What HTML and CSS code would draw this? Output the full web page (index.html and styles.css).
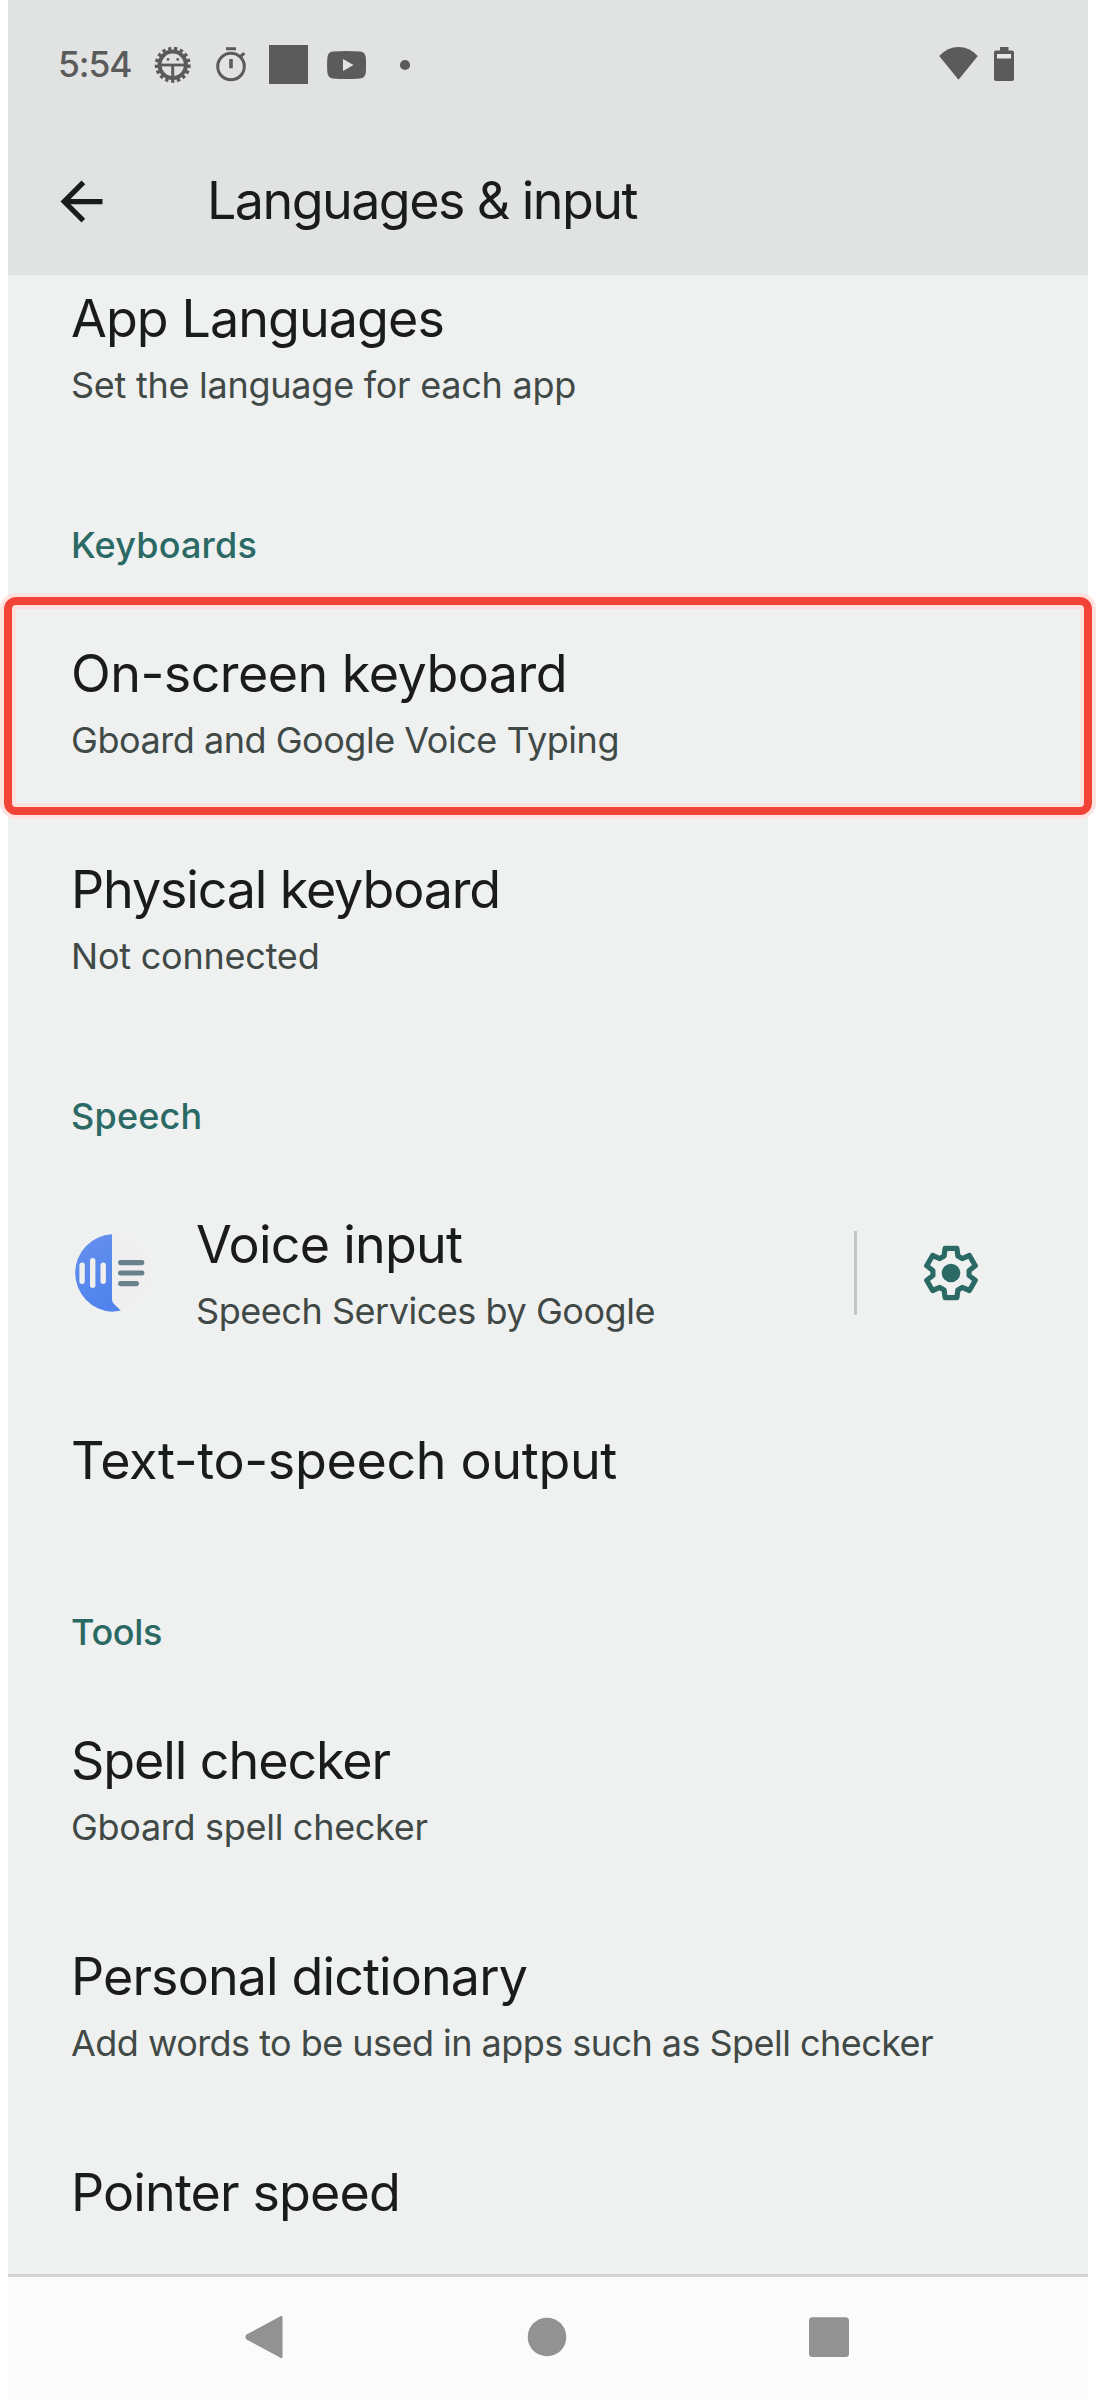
FILE: index.html
```html
<!DOCTYPE html>
<html lang="en">
<head>
<meta charset="utf-8">
<title>Languages &amp; input</title>
<link rel="stylesheet" href="styles.css">
</head>
<body>
<div class="phone">
  <header class="top">
    <div class="status">
      <span class="time">5:54</span>
      <div class="status-icons">
        <svg width="39" height="39" viewBox="0 0 39 39" fill="none" stroke="currentColor">
          <circle cx="19.7" cy="19.8" r="16" stroke-width="4" pathLength="34" stroke-dasharray="1.1 .9" transform="rotate(84.2 19.7 19.8)"/>
          <circle cx="19.7" cy="19.8" r="13.2" stroke-width="4"/>
          <path d="M7 20h25.400" stroke-width="2.800"/>
          <path d="M19.700 21v13" stroke-width="3"/>
          <g fill="currentColor" stroke="none"><circle cx="15" cy="14.400" r="1.400"/><circle cx="24.700" cy="14.400" r="1.400"/></g>
        </svg>
        <svg width="39" height="39" viewBox="0 0 39 39" fill="none" stroke="currentColor" stroke-width="3">
          <circle cx="20" cy="21.500" r="13.300"/>
          <path d="M15 3.700h10M29.500 11.500l3.800-3.300"/>
          <path d="M20 14v9.300" stroke-width="3.600"/>
        </svg>
        <svg width="39" height="39" viewBox="0 0 39 39" fill="currentColor"><path d="M0 0h39v39H0z"/></svg>
        <svg width="39" height="39" viewBox="0 0 39 39" fill="currentColor">
          <path fill-rule="evenodd" d="M6 6.600Q19.500 5.400 33 6.600 38.300 7 38.800 12.500 39.300 20 38.800 27.500 38.300 33 33 33.400 19.500 34.600 6 33.400.9 33 .4 27.500-.3 20 .4 12.500.9 7 6 6.600zM16 14v12l10.500-6z"/>
        </svg>
        <svg width="39" height="39" viewBox="0 0 39 39" fill="currentColor"><circle cx="20" cy="20" r="5.100"/></svg>
      </div>
      <div class="status-right">
        <svg width="39" height="39" viewBox="0 0 39 39" fill="currentColor"><path d="M.2 11Q8.500 2 19.500 2T38.800 11L19.500 34.700z"/></svg>
        <svg width="20" height="39" viewBox="0 0 20 39" fill="currentColor"><path fill-rule="evenodd" d="M6 2h8.500v3.500H18q2 0 2 2V34q0 2-2 2H2q-2 0-2-2V7.500q0-2 2-2h4z"/><path d="M3 9h14v4.500H3z" fill="#e9eaea"/></svg>
      </div>
    </div>
    <div class="appbar">
      <svg class="back" width="63" height="63" viewBox="0 0 24 24" fill="currentColor"><path d="M20 11H7.830l5.590-5.590L12 4l-8 8 8 8 1.410-1.410L7.830 13H20z"/></svg>
      <h1 class="t-bar">Languages &amp; input</h1>
    </div>
  </header>

  <main class="list">
    <section class="item first"><h2 class="t-app">App Languages</h2><p class="s-app">Set the language for each app</p></section>
    <h3 class="c-key">Keyboards</h3>
    <section class="item"><h2 class="t-screen">On-screen keyboard</h2><p class="s-screen">Gboard and Google Voice Typing</p><div class="highlight"></div></section>
    <section class="item"><h2 class="t-phys">Physical keyboard</h2><p class="s-phys">Not connected</p></section>
    <h3 class="c-speech">Speech</h3>
    <section class="item voice">
      <svg class="voice-icon" width="76" height="80" viewBox="0 0 76 80">
        <defs><linearGradient id="blue" x1="0" y1="0" x2="0.300" y2="1"><stop offset="0" stop-color="#6691ee"/><stop offset="1" stop-color="#5083ec"/></linearGradient></defs>
        <path d="M39 1.200a38.800 38.800 0 0 1 9 76.300L39 68z" fill="#efefef"/>
        <path d="M39 1.200V66q0 3 2 5l6.800 6.600Q43 78.700 39 78.700A38.800 38.800 0 0 1 39 1.200z" fill="url(#blue)"/>
        <g fill="#efefef"><rect x="6.400" y="29.500" width="5.400" height="21.500" rx="2.700"/><rect x="17" y="25" width="5.400" height="30" rx="2.700"/><rect x="27.500" y="29.500" width="5.400" height="21.500" rx="2.700"/></g>
        <g fill="#69808d"><rect x="45" y="27" width="26.400" height="5.200" rx="2.400"/><rect x="45" y="37.400" width="26.400" height="5.200" rx="2.400"/><rect x="45" y="48" width="21" height="5.200" rx="2.400"/></g>
      </svg>
      <div class="voice-text"><h2 class="t-voice">Voice input</h2><p class="s-voice">Speech Services by Google</p></div>
      <div class="divider"></div>
      <svg class="gear" width="60" height="60" viewBox="-30 -30 60 60">
        <path d="M-6.900-16.900-5.900-24.700H5.900L6.900-16.900 11.200-14.400 18.400-17.500 24.300-7.200 18.100-2.500V2.500L24.300 7.200 18.400 17.500 11.200 14.400 6.900 16.900 5.900 24.700H-5.900L-6.900 16.900-11.200 14.400-18.400 17.500-24.300 7.200-18.100 2.500V-2.500L-24.300-7.200-18.400-17.500-11.200-14.400z" fill="none" stroke="currentColor" stroke-width="5.200" stroke-linejoin="round"/>
        <circle r="9.300" fill="currentColor"/>
      </svg>
    </section>
    <section class="item single"><h2 class="t-tts">Text-to-speech output</h2></section>
    <h3 class="c-tools">Tools</h3>
    <section class="item"><h2 class="t-spell">Spell checker</h2><p class="s-spell">Gboard spell checker</p></section>
    <section class="item"><h2 class="t-dict">Personal dictionary</h2><p class="s-dict">Add words to be used in apps such as Spell checker</p></section>
    <section class="item single"><h2 class="t-pointer">Pointer speed</h2></section>
  </main>

  <nav class="nav">
    <svg width="42" height="44" viewBox="0 0 42 44" fill="currentColor"><path d="M39.500 2v40q0 1.500-1.500 1L3.500 24.500Q1.500 22 3.500 19.500L38 1q1.500-.5 1.500 1z"/></svg>
    <svg width="42" height="44" viewBox="0 0 42 44" fill="currentColor"><circle cx="21" cy="22" r="19.300"/></svg>
    <svg width="42" height="44" viewBox="0 0 42 44" fill="currentColor"><rect x="1" y="2.200" width="40" height="39.800" rx="3.500"/></svg>
  </nav>
</div>
</body>
</html>
```
FILE: styles.css
```css
* { box-sizing: border-box; margin: 0; padding: 0; }
body { background: #fff; font-family: Inter, Roboto, sans-serif; color: #1a1c1b; }
svg { display: block; flex: none; }
.phone { width: 1080px; height: 2400px; margin: 0 auto; display: flex; flex-direction: column; background: #eff1f0; }

.top { flex: none; height: 275px; background: #e1e3e2; }
.status { height: 129px; padding: 0 74px 0 50px; display: flex; align-items: center; color: #5b5b5b; }
.time { width: 95px; font-size: 35.5px; font-weight: 500; letter-spacing: -1.1px; white-space: nowrap; }
.status-icons { display: flex; gap: 19px; }
.status-right { display: flex; gap: 16px; margin-left: auto; }
.appbar { height: 146px; display: flex; align-items: flex-start; padding: 41px 0 0 42px; }
.appbar h1 { margin: -1px 0 0 94px; }

h1, h2 { font-size: 52px; line-height: 64px; font-weight: 400; white-space: nowrap; }
p { margin-top: 10px; font-size: 36px; line-height: 48px; color: #414947; white-space: nowrap; }
h3 { height: 139px; padding: 65px 0 26px 63px; font-size: 36px; line-height: 48px; font-weight: 500; color: #2b6965; }

.list { flex: none; height: 1999px; overflow: visible; }
.item { position: relative; height: 216px; padding: 47px 0 47px 63px; }
.item.first { height: 181px; padding-top: 12px; }
.item.single { height: 161px; }
.highlight { position: absolute; left: -4px; right: -4px; top: 2px; height: 218px; border: 8px solid #f14437; border-radius: 12px; box-shadow: 0 0 0 4px #ffe2e0, inset 0 0 0 4px #ffe2e0; }

.voice { display: flex; }
.voice-icon { margin-left: 2px; margin-top: 20px; }
.voice-text { width: 650px; margin-left: 47px; }
.divider { width: 3px; height: 84px; margin: 18px 0 0 8px; background: #c4c6c5; }
.gear { margin: 30px 0 0 64px; color: #2b6965; }

.nav { flex: none; height: 126px; padding: 38px 238px 0 235px; border-top: 3px solid #d1d3d2; background: #fbfbfb; color: #929292; display: flex; justify-content: space-between; }

/* Per-label tracking */
.t-bar { letter-spacing: -1.560px; }
.t-app { letter-spacing: -.930px; }
.t-screen { letter-spacing: -.540px; }
.t-phys { letter-spacing: -1.150px; }
.t-voice { letter-spacing: -.750px; }
.t-tts { letter-spacing: -.340px; }
.t-spell { letter-spacing: -1.080px; }
.t-dict { letter-spacing: -.900px; }
.t-pointer { letter-spacing: -.870px; }
.s-app { letter-spacing: -.260px; }
.s-screen { letter-spacing: -.470px; }
.s-phys { letter-spacing: -.220px; }
.s-voice { letter-spacing: -.460px; }
.s-spell { letter-spacing: -.300px; }
.s-dict { letter-spacing: -.540px; }
.c-key { letter-spacing: .190px; }
.c-speech { letter-spacing: .200px; }
.c-tools { letter-spacing: -.300px; }
```
